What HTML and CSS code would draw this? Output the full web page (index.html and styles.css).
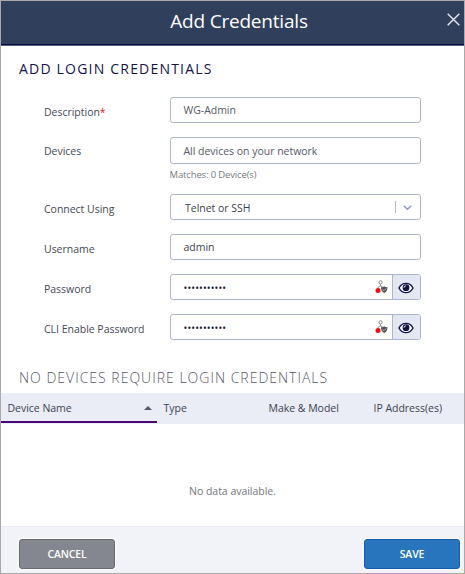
FILE: index.html
```html
<!DOCTYPE html>
<html lang="en">
<head>
<meta charset="utf-8">
<title>Add Credentials</title>
<link rel="stylesheet" href="styles.css">
</head>
<body>
<svg width="0" height="0" class="defs">
  <symbol id="eye" viewBox="0 0 16 12">
    <path d="M1 6C4 -.2 12 -.2 15 6C12 12.2 4 12.2 1 6Z" fill="#fff" stroke="#15124a" stroke-width="1.4"/>
    <circle cx="8" cy="5.7" r="3.4" fill="#15124a"/>
    <path d="M6 5.6Q6.2 4 7.8 3.8" fill="none" stroke="#fff" stroke-width="1"/>
  </symbol>
  <symbol id="account" viewBox="0 0 13 14">
    <circle cx="5.5" cy="2.4" r="1.6" fill="none" stroke="#858585"/>
    <path d="M5.5 4.2V6M2.6 8.5Q3.3 6 5.5 6Q7 6 7.5 7" fill="none" stroke="#858585" stroke-width=".9"/>
    <circle cx="3" cy="10.6" r="2.5" fill="#ee0c14"/>
    <path d="M6 7.1Q8 7.3 9.2 6.3Q10.4 7.3 12.4 7.1Q12.7 11.6 9.2 13Q5.8 11.6 6 7.1Z" fill="#51555a"/>
    <path d="M7.6 9.3L9 10.6L11 8.6" fill="none" stroke="#c4c7ca" stroke-width=".9"/>
  </symbol>
</svg>
<main class="dialog">
  <header class="titlebar">
    <h1>Add Credentials</h1>
    <button class="close" aria-label="Close"><svg width="13" height="13" viewBox="0 0 13 13"><path d="M.7.7L12.3 12.3M12.3.7L.7 12.3" stroke="#e4e8f1" stroke-width="1.4"/></svg></button>
  </header>
  <section class="content">
    <h2>ADD LOGIN CREDENTIALS</h2>
    <div class="row"><label>Description<b>*</b></label><div class="field">WG-Admin</div></div>
    <div class="row devices"><label>Devices</label><div class="field">All devices on your network</div></div>
    <p class="hint">Matches: 0 Device(s)</p>
    <div class="row"><label>Connect Using</label><div class="field select"><span>Telnet or SSH</span><i></i><svg width="9" height="6" viewBox="0 0 9 6"><path d="M.8.8L4.5 4.3L8.2.8" fill="none" stroke="#8f99b8" stroke-width="1.5"/></svg></div></div>
    <div class="row"><label>Username</label><div class="field user">admin</div></div>
    <div class="row"><label>Password</label><div class="field secret"><span class="dots">•••••••••••</span><svg class="account"><use href="#account"/></svg><span class="reveal"><svg><use href="#eye"/></svg></span></div></div>
    <div class="row"><label>CLI Enable Password</label><div class="field secret"><span class="dots">•••••••••••</span><svg class="account"><use href="#account"/></svg><span class="reveal"><svg><use href="#eye"/></svg></span></div></div>
    <h3>NO DEVICES REQUIRE LOGIN CREDENTIALS</h3>
  </section>
  <div class="columns">
    <div class="sorted"><span>Device Name</span><i></i></div>
    <div>Type</div>
    <div>Make &amp; Model</div>
    <div>IP Address(es)</div>
  </div>
  <div class="empty">No data available.</div>
  <footer><button class="cancel">CANCEL</button><button class="save">SAVE</button></footer>
</main>
</body>
</html>
```
FILE: styles.css
```css
* { box-sizing: border-box; }
body { margin: 0; font-family: "Open Sans", sans-serif; font-size: 10.5px; letter-spacing: -.02px; color: #454955; background: #fff; }
.defs { display: none; }
.dialog { width: 465px; height: 574px; border: 1px solid #a9a9a9; display: flex; flex-direction: column; overflow: hidden; white-space: nowrap; }
.titlebar { height: 45px; flex: none; background: #30405c; border-bottom: 1px solid #56607c; box-shadow: inset 0 -1px #080842; display: grid; grid-template-columns: 30px 1fr 30px; align-items: start; }
h1 { grid-column: 2; margin: 7px 0 0; text-align: center; font-size: 19px; line-height: 27px; font-weight: 400; letter-spacing: -.2px; color: #fff; text-indent: 13px; }
button { font-family: inherit; }
.close { width: 13px; height: 13px; margin: 12px 0 0 13px; padding: 0; border: 0; background: none; }
.close svg { display: block; }
.content { height: 347px; flex: none; padding: 11px 43px 0; }
h2 { margin: 0 0 16px -25px; font-size: 14px; line-height: 24px; font-weight: 400; letter-spacing: 1.2px; color: #15124a; }
.row { height: 26px; display: grid; grid-template-columns: 126px 251px; align-items: center; margin-bottom: 14px; }
.row label { padding-top: 3px; }
.row b { color: #e5202b; font-weight: 400; }
.row.devices { height: 27px; margin-bottom: 0; }
.row.devices label { padding-top: 0; }
.field { height: 100%; border: 1px solid #aeb6ce; border-radius: 3px; padding-left: 12.5px; display: flex; align-items: center; color: #555966; }
.hint { margin: 2px 0 12px 125.5px; font-size: 9.5px; line-height: 17px; height: 16px; letter-spacing: -.14px; color: #777a82; }
.select { padding-left: 14px; padding-right: 8px; color: #3b3f4b; }
.user { color: #3b3f4b; }
.select span { flex: 1; padding-top: 2px; }
.select i { width: 1px; height: 12px; background: #b3b9c9; margin-right: 7px; }
.select svg { margin-top: 2px; }
.secret { color: #15152e; }
.dots { flex: 1; font-size: 10px; letter-spacing: .12px; padding-top: 1px; }
.account { width: 13px; height: 14px; margin-right: 4px; }
.reveal { width: 28px; height: 24px; border-left: 1px solid #aeb6ce; background: #e3e7f2; border-radius: 0 2px 2px 0; display: flex; align-items: center; justify-content: center; padding: 2px 1px 0 0; }
.reveal svg { width: 16px; height: 12px; }
h3 { margin: 28px 0 0 -25px; font-size: 14px; line-height: 20px; font-weight: 300; letter-spacing: 1px; color: #555966; }
.columns { height: 31px; flex: none; display: grid; grid-template-columns: 156px 105px 105px 1fr; background: #eaedf5; line-height: 30px; color: #3c4150; }
.columns > div { padding-left: 6.5px; height: 30px; }
.sorted { display: flex; align-items: center; border-bottom: 2px solid #480573; }
.sorted span { flex: 1; padding-top: 2px; }
.sorted i { border: 4px solid transparent; border-top: 0; border-bottom-color: #53596b; margin: 1px 5px 0 0; }
.empty { flex: 1; display: flex; align-items: center; justify-content: center; padding-top: 31px; color: #73767e; }
footer { height: 47px; flex: none; background: #f2f3f8; border-top: 1px solid #e8eaf4; padding: 12px 4px 0 18px; display: flex; justify-content: space-between; }
footer button { width: 96px; height: 30px; padding: 0 0 1px; border-radius: 3px; color: #fff; font-size: 10.5px; font-weight: 600; box-shadow: 0 0 0 1px #fff; }
.cancel { background: #84878f; border: 1px solid #656774; letter-spacing: -.2px; }
.save { background: #2875be; border: 1px solid #155ba9; letter-spacing: -.1px; }
```
